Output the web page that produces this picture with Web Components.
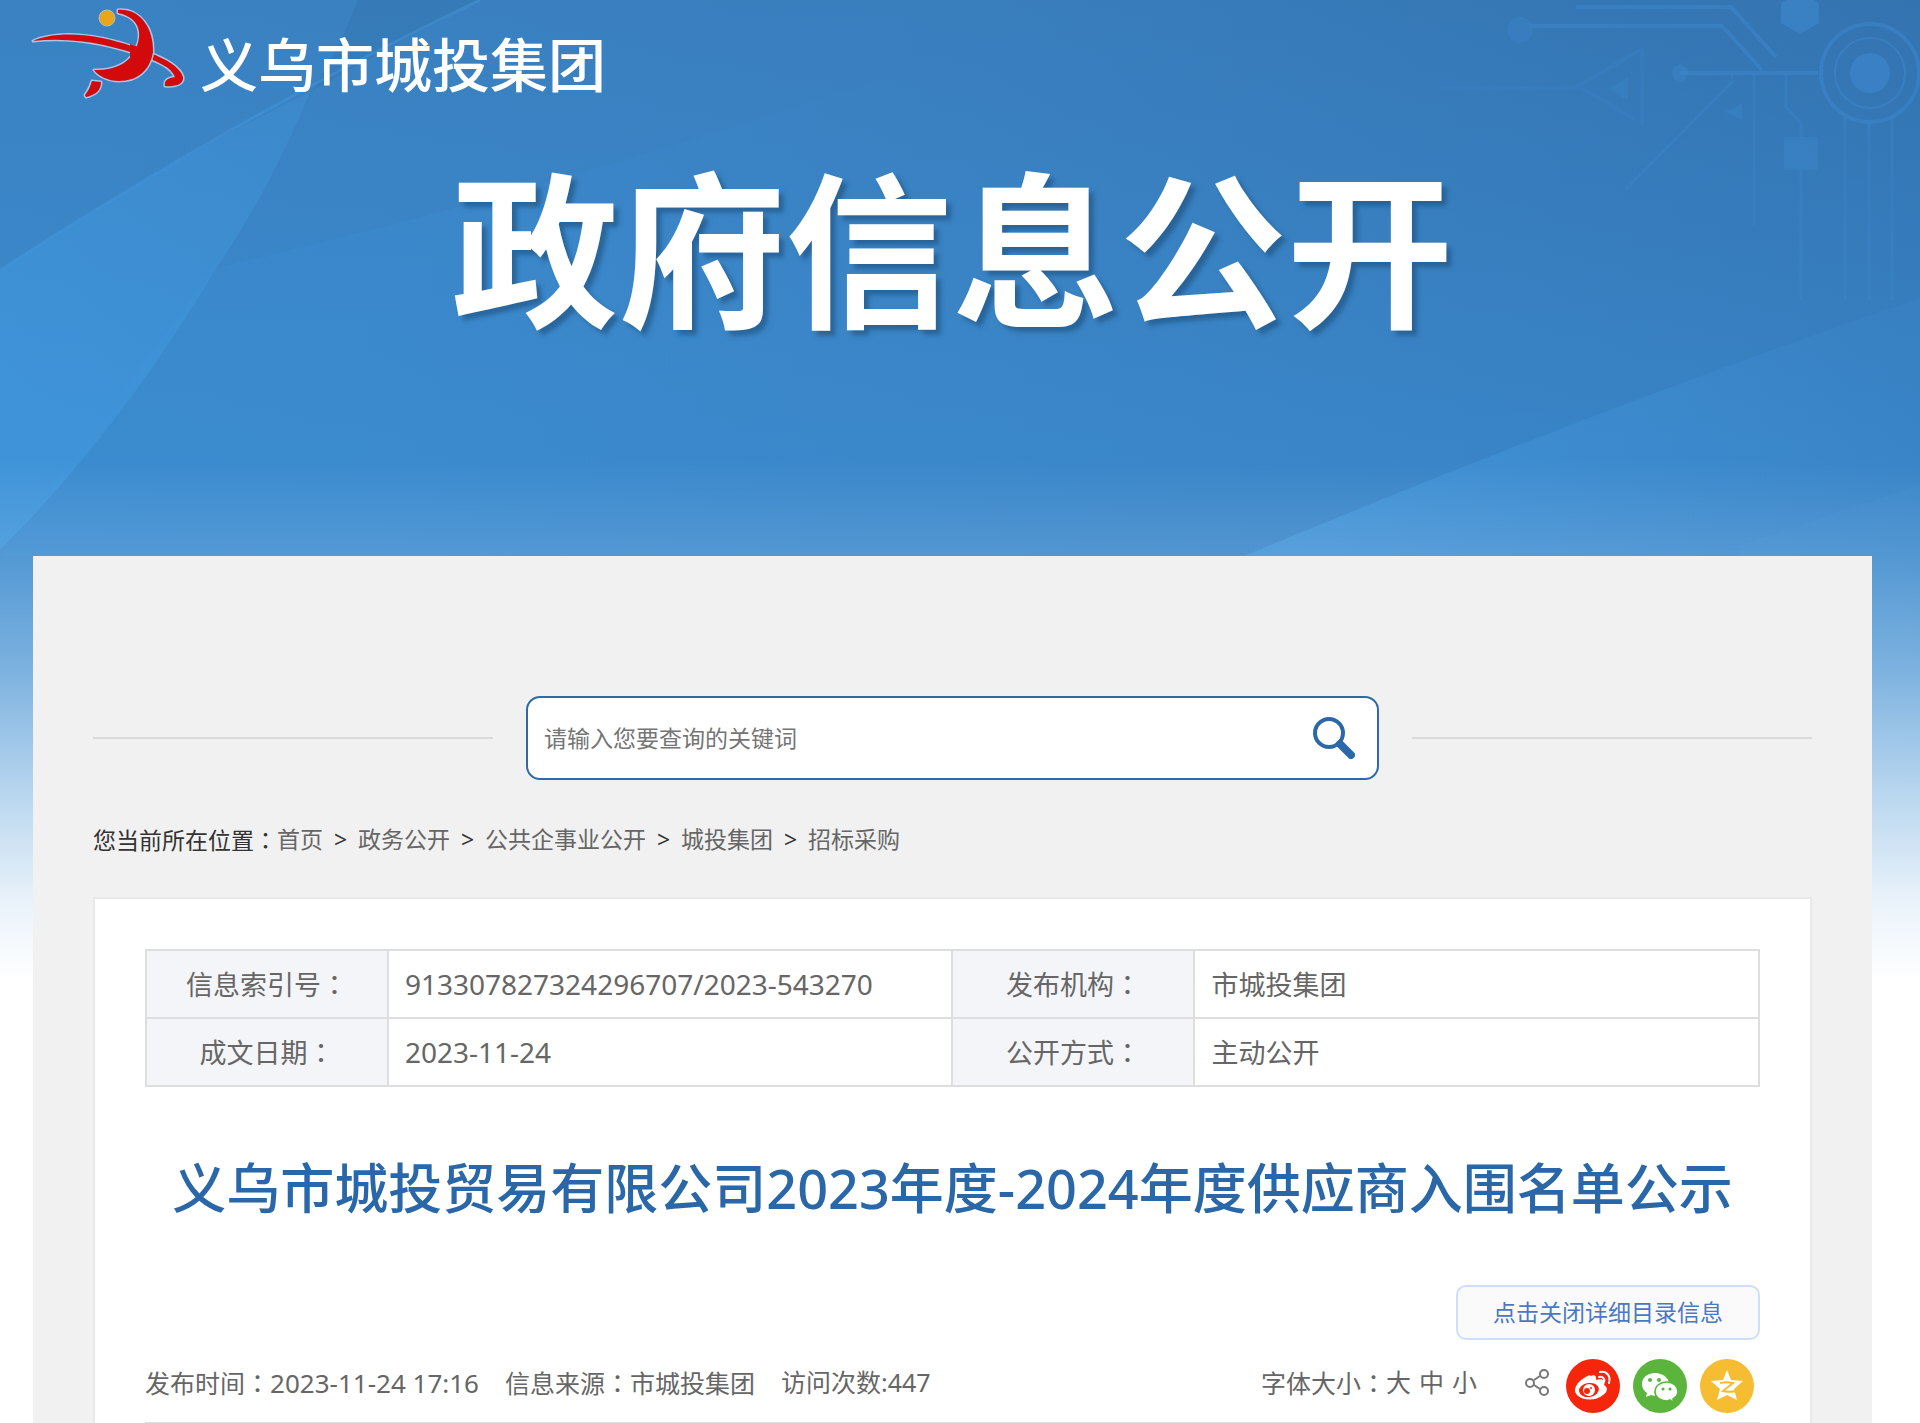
<!DOCTYPE html>
<html lang="zh-CN">
<head>
    <meta charset="UTF-8">
    <meta name="viewport" content="width=device-width, initial-scale=1.0">
    <title>义乌市城投集团 - 政府信息公开</title>
    <style>
        body {
            margin: 0;
            background: #fff;
            color: #666;
            font-family: "Noto Sans", "Noto Sans CJK SC", sans-serif;
            font-size: 23px;
            line-height: 35px;
        }
    </style>
</head>
<body>
    <page-shell>
        <site-header slot="header" brand="义乌市城投集团">政府信息公开</site-header>
        <search-bar placeholder="请输入您要查询的关键词"></search-bar>
        <bread-crumb label="您当前所在位置">
            <a href="#">首页</a>
            <a href="#">政务公开</a>
            <a href="#">公共企事业公开</a>
            <a href="#">城投集团</a>
            <a href="#">招标采购</a>
        </bread-crumb>
        <article-card>
            <info-table></info-table>
            <span slot="title">义乌市城投贸易有限公司2023年度-2024年度供应商入围名单公示</span>
            <article-meta slot="meta" time="2023-11-24 17:16" source="市城投集团" visits="447"></article-meta>
        </article-card>
    </page-shell>

    <script>
        // full-width colon, set in the middle of its cell
        const colon = '<span lang="zh-TW" style="font-family: \'Noto Sans CJK TC\', sans-serif">：</span>';

        class BaseElement extends HTMLElement {
            constructor() {
                super();
                this.attachShadow({ mode: 'open' });
            }

            connectedCallback() {
                this.shadowRoot.innerHTML = this.render();
            }
        }

        class PageBackdrop extends BaseElement {
            render() {
                return `
                    <style>
                        :host { display: block; }
                        svg { display: block; width: 100%; height: 100%; }
                    </style>
                    <svg viewBox="0 0 1920 980" preserveAspectRatio="none" aria-hidden="true">
                        <defs>
                            <linearGradient id="sky" x1="0" y1="0" x2="1" y2="0">
                                <stop offset="0" stop-color="#3a82c2"/>
                                <stop offset="0.5" stop-color="#397ebd"/>
                                <stop offset="1" stop-color="#3373b0"/>
                            </linearGradient>
                            <linearGradient id="lower" x1="0" y1="0" x2="0" y2="1">
                                <stop offset="0" stop-color="#3b90d6" stop-opacity="0"/>
                                <stop offset="0.45" stop-color="#3b90d6" stop-opacity="0.5"/>
                                <stop offset="1" stop-color="#3b90d6" stop-opacity="0.9"/>
                            </linearGradient>
                            <linearGradient id="fade" x1="0" y1="460" x2="0" y2="980" gradientUnits="userSpaceOnUse">
                                <stop offset="0" stop-color="#fff" stop-opacity="0"/>
                                <stop offset="0.18" stop-color="#fff" stop-opacity="0.12"/>
                                <stop offset="0.4" stop-color="#fff" stop-opacity="0.33"/>
                                <stop offset="0.65" stop-color="#fff" stop-opacity="0.65"/>
                                <stop offset="0.85" stop-color="#fff" stop-opacity="0.89"/>
                                <stop offset="1" stop-color="#fff"/>
                            </linearGradient>
                            <linearGradient id="left" x1="310" y1="90" x2="0" y2="480" gradientUnits="userSpaceOnUse">
                                <stop offset="0" stop-color="#419ae0" stop-opacity="0.25"/>
                                <stop offset="1" stop-color="#419ae0" stop-opacity="0.65"/>
                            </linearGradient>
                            <linearGradient id="right" x1="1300" y1="560" x2="1900" y2="330" gradientUnits="userSpaceOnUse">
                                <stop offset="0" stop-color="#4aa0e4" stop-opacity="0.5"/>
                                <stop offset="1" stop-color="#4296de" stop-opacity="0.1"/>
                            </linearGradient>
                            <linearGradient id="middle" x1="400" y1="200" x2="900" y2="300" gradientUnits="userSpaceOnUse">
                                <stop offset="0" stop-color="#3c94dc" stop-opacity="0.2"/>
                                <stop offset="1" stop-color="#3c94dc" stop-opacity="0"/>
                            </linearGradient>
                        </defs>
                        <rect width="1920" height="980" fill="url(#sky)"/>
                        <rect width="1920" height="980" fill="url(#lower)"/>
                        <path d="M358 0H480L400 42L313 90Q342 42 358 0Z" fill="#2c6ba0" fill-opacity="0.25"/>
                        <path d="M215 268Q560 190 1000 40V556H0Z" fill="url(#middle)"/>
                        <path d="M0 270Q160 165 310 92Q270 190 215 270Q120 430 0 550Z" fill="url(#left)"/>
                        <path d="M0 270Q240 115 480 0" fill="none" stroke="#4496dc" stroke-width="3" stroke-opacity="0.5"/>
                        <path d="M1230 562Q1580 415 1920 298V980H1230Z" fill="url(#right)"/>
                        <path d="M1740 545L1920 485V980H1740Z" fill="#4a9ce0" fill-opacity="0.12"/>
                        <g fill="none" stroke="#3c86ca" stroke-opacity="0.6">
                            <path d="M1576 7H1731L1776 57M1530 26H1722L1762 70M1680 73H1818" stroke-width="4"/>
                            <circle cx="1870" cy="73" r="49" stroke-width="4"/>
                            <circle cx="1870" cy="73" r="35" stroke-width="2"/>
                            <path d="M1754 75V225M1786 75V107L1801 123V137M1732 75V82L1625 190" stroke-width="3" stroke-opacity="0.4"/>
                            <path d="M1801 170V300M1845 117V300M1869 122V300M1892 117V300" stroke-width="3" stroke-opacity="0.4"/>
                            <path d="M1642 49V125M1642 49L1578 86L1634 119M1440 88H1578" stroke-width="4" stroke-opacity="0.3"/>
                        </g>
                        <g fill="#3c86ca" fill-opacity="0.7">
                            <path d="M1781 3L1800 -8L1819 3V23L1800 34L1781 23Z"/>
                            <circle cx="1870" cy="73" r="20"/>
                            <circle cx="1680" cy="73" r="8" fill-opacity="0.5"/>
                            <circle cx="1520" cy="30" r="13" fill-opacity="0.35"/>
                            <path d="M1784 137H1818V170H1784Z" fill-opacity="0.5"/>
                            <path d="M1607 89L1628 78V100ZM1725 112L1742 103V120Z" fill-opacity="0.4"/>
                        </g>
                        <rect width="1920" height="980" fill="url(#fade)"/>
                    </svg>
                `;
            }
        }

        class PageShell extends BaseElement {
            render() {
                return `
                    <style>
                        :host { display: block; position: relative; }
                        page-backdrop { position: absolute; inset: 0 0 auto; height: 980px; z-index: -1; }
                        main {
                            margin: 0 48px 0 33px;
                            padding: 140px 60px 0;
                            background: #f1f1f1;
                        }
                    </style>
                    <page-backdrop></page-backdrop>
                    <slot name="header"></slot>
                    <main><slot></slot></main>
                `;
            }
        }

        class SiteHeader extends BaseElement {
            render() {
                return `
                    <style>
                        :host { display: block; height: 556px; color: #fff; }
                        .brand {
                            display: flex;
                            align-items: center;
                            gap: 8px;
                            height: 130px;
                            padding-left: 24px;
                            font-size: 58px;
                            font-weight: 500;
                            line-height: 70px;
                        }
                        svg { width: 168px; height: 130px; }
                        h1 {
                            margin: 12px 15px 0 0;
                            font-family: "Noto Sans CJK SC", sans-serif;
                            font-size: 167px;
                            font-weight: 700;
                            line-height: 200px;
                            text-align: center;
                            text-shadow: 5px 5px 4px rgba(30, 80, 125, 0.6);
                        }
                    </style>
                    <div class="brand">
                        <svg viewBox="24 0 168 130" aria-hidden="true">
                            <g fill="#d20a0c" stroke="#a9c6e6" stroke-width="3" stroke-linejoin="round" paint-order="stroke">
                                <path d="M92 81L101 82C101 91 95 95 86 97L85 95C89 90 90 87 92 81Z"/>
                                <path d="M33 41C58 30 98 34 134 47L150 53C166 59 180 67 183 77C184 84 176 87 165 86C164 80 168 78 175 77C171 67 158 62 145 57C115 46 75 36 33 41Z"/>
                                <path d="M118 10C141 8 154 30 153 52C150 70 138 81 119 81C108 81 98 76 94 70C112 71 128 64 134 52C143 37 142 18 118 13Z"/>
                            </g>
                            <path d="M130 44L150 51L145 60L130 57Z" fill="#d20a0c"/>
                            <circle cx="107" cy="18" r="8" fill="#eaa61a" stroke="#a8bfc4" stroke-width="1"/>
                        </svg>
                        <span>${this.getAttribute('brand')}</span>
                    </div>
                    <h1><slot></slot></h1>
                `;
            }
        }

        class SearchBar extends BaseElement {
            render() {
                const text = this.getAttribute('placeholder');
                return `
                    <style>
                        :host { display: flex; align-items: center; gap: 33px; }
                        .rule { flex: 1; height: 2px; background: #dadada; }
                        form {
                            box-sizing: border-box;
                            display: flex;
                            align-items: center;
                            width: 853px;
                            height: 84px;
                            padding: 0 22px 0 16px;
                            border: 2px solid #2f69a8;
                            border-radius: 14px;
                            background: #fff;
                        }
                        input {
                            flex: 1;
                            min-width: 0;
                            height: 60px;
                            padding: 0;
                            border: 0;
                            outline: 0;
                            background: none;
                            color: #333;
                            font: inherit;
                        }
                        input::placeholder { color: #757575; opacity: 1; }
                        button { padding: 0; border: 0; background: none; cursor: pointer; }
                        svg { display: block; width: 42px; height: 42px; }
                    </style>
                    <span class="rule"></span>
                    <form role="search">
                        <input type="text" aria-label="${text}" placeholder="${text}">
                        <button type="button" aria-label="搜索">
                            <svg viewBox="0 0 42 42" fill="none" stroke="#2c68a8" stroke-linecap="round">
                                <circle cx="16" cy="16" r="14" stroke-width="4"/>
                                <path d="M27 27L38 38" stroke-width="8"/>
                            </svg>
                        </button>
                    </form>
                    <span class="rule"></span>
                `;
            }
        }

        class BreadCrumb extends BaseElement {
            render() {
                return `
                    <style>
                        :host { display: block; margin: 42px 0 39px; color: #333; }
                        nav { display: flex; }
                        a { color: #666; text-decoration: none; }
                        .sep { width: 35px; text-align: center; }
                    </style>
                    <nav aria-label="breadcrumb">
                        <span>${this.getAttribute('label')}${colon}</span>
                        ${[...this.querySelectorAll('a')]
                            .map(a => `<a href="${a.getAttribute('href')}">${a.textContent}</a>`)
                            .join('<span class="sep">&gt;</span>')}
                    </nav>
                `;
            }
        }

        class ArticleCard extends BaseElement {
            render() {
                return `
                    <style>
                        :host {
                            display: block;
                            padding: 50px 50px 0;
                            border: 2px solid #e8e9eb;
                            border-bottom: 0;
                            background: #fff;
                        }
                        h2 {
                            margin: 66px 0 62px;
                            color: #2a67a8;
                            font-size: 54px;
                            font-weight: 500;
                            line-height: 70px;
                            text-align: center;
                        }
                        .actions { display: flex; justify-content: flex-end; margin-bottom: 19px; }
                        button {
                            width: 304px;
                            height: 55px;
                            padding: 0;
                            border: 2px solid #cddffa;
                            border-radius: 10px;
                            background: #fafafa;
                            color: #4a78c2;
                            font: inherit;
                            cursor: pointer;
                        }
                    </style>
                    <slot></slot>
                    <h2><slot name="title"></slot></h2>
                    <div class="actions"><button type="button">点击关闭详细目录信息</button></div>
                    <slot name="meta"></slot>
                `;
            }
        }

        class InfoTable extends BaseElement {
            render() {
                return `
                    <style>
                        :host { display: block; font-size: 27px; }
                        table {
                            width: 100%;
                            border-collapse: collapse;
                            table-layout: fixed;
                        }
                        th, td {
                            box-sizing: border-box;
                            height: 68px;
                            padding: 0;
                            border: 2px solid #dddee0;
                        }
                        th { width: 15%; background: #f4f5f8; font-weight: 400; }
                        td { width: 35%; padding-left: 16px; }
                        .num { font-size: 28px; }
                    </style>
                    <table>
                        <tr>
                            <th scope="row">信息索引号${colon}</th>
                            <td class="num">913307827324296707/2023-543270</td>
                            <th scope="row">发布机构${colon}</th>
                            <td>市城投集团</td>
                        </tr>
                        <tr>
                            <th scope="row">成文日期${colon}</th>
                            <td class="num">2023-11-24</td>
                            <th scope="row">公开方式${colon}</th>
                            <td>主动公开</td>
                        </tr>
                    </table>
                `;
            }
        }

        class ArticleMeta extends BaseElement {
            render() {
                return `
                    <style>
                        :host {
                            display: flex;
                            justify-content: space-between;
                            padding-bottom: 9px;
                            border-bottom: 2px solid #dedede;
                            font-size: 25px;
                            line-height: 46px;
                        }
                        .facts { display: flex; gap: 26px; }
                        .num { font-size: 26px; }
                        .tools { display: flex; padding-right: 6px; }
                        .size { display: flex; gap: 8px; margin-right: 48px; }
                        .size a { color: inherit; text-decoration: none; }
                        .share { display: flex; align-items: center; gap: 13px; }
                        .share a { display: block; height: 54px; }
                        .share svg { display: block; }
                    </style>
                    <div class="facts">
                        <span>发布时间${colon}<span class="num">${this.getAttribute('time')}</span></span>
                        <span>信息来源${colon}${this.getAttribute('source')}</span>
                        <span>访问次数:${this.getAttribute('visits')}</span>
                    </div>
                    <div class="tools">
                        <div class="size">
                            <span style="margin-right: -8px">字体大小${colon}</span>
                            <a href="#">大</a><a href="#">中</a><a href="#">小</a>
                        </div>
                        <div class="share">
                            <a href="#" aria-label="分享">
                                <svg width="28" height="54" viewBox="0 0 28 54" fill="none" stroke="#777" stroke-width="2">
                                    <circle cx="5" cy="24" r="4"/>
                                    <circle cx="19" cy="15" r="4"/>
                                    <circle cx="19" cy="32" r="4"/>
                                    <path d="M9 21L15 17M9 26L15 30"/>
                                </svg>
                            </a>
                            <a href="#" aria-label="微博">
                                <svg width="54" height="54" viewBox="0 0 54 54">
                                    <circle cx="27" cy="27" r="27" fill="#f5260c"/>
                                    <path d="M25 17C28 15 31 17 30 21C36 19 40 21 38 26C42 28 42 33 37 36C30 42 17 42 11 36C6 31 11 23 18 19C21 17 24 15 25 17Z" fill="#fff"/>
                                    <ellipse cx="23" cy="31" rx="10" ry="7" fill="#f5260c" transform="rotate(-8 23 31)"/>
                                    <circle cx="23" cy="31" r="6" fill="#fff"/>
                                    <circle cx="21" cy="32" r="3" fill="#f5260c"/>
                                    <circle cx="25" cy="29" r="1" fill="#f5260c"/>
                                    <path d="M34 13C41 12 45 17 43 24M33 18C37 17 39 20 38 23" fill="none" stroke="#fff" stroke-width="2" stroke-linecap="round"/>
                                </svg>
                            </a>
                            <a href="#" aria-label="微信">
                                <svg width="54" height="54" viewBox="0 0 54 54">
                                    <circle cx="27" cy="27" r="27" fill="#5bb53c"/>
                                    <path d="M22 14C14 14 9 19 9 25C9 29 11 32 14 34L13 38L18 36C20 37 23 37 25 36C33 36 36 31 36 25C36 19 30 14 22 14Z" fill="#fff"/>
                                    <path d="M34 23C27 23 22 27 22 33C22 38 27 42 34 42L37 41L41 44L40 40C43 38 45 36 45 33C45 27 40 23 34 23Z" fill="#fff" stroke="#5bb53c" stroke-width="1.6"/>
                                    <g fill="#5bb53c">
                                        <circle cx="17" cy="21" r="2"/><circle cx="26" cy="21" r="2"/>
                                        <circle cx="30" cy="30" r="1.6"/><circle cx="37" cy="30" r="1.6"/>
                                    </g>
                                </svg>
                            </a>
                            <a href="#" aria-label="QQ空间">
                                <svg width="54" height="54" viewBox="0 0 54 54">
                                    <circle cx="27" cy="27" r="27" fill="#f6bd33"/>
                                    <path d="M27 11L31 21L43 22L34 30L37 41L27 36L17 41L20 30L11 22L23 21Z" fill="#fff"/>
                                    <path d="M20 24C24 23 29 23 33 24L23 32C27 33 32 33 36 32" fill="none" stroke="#f6bd33" stroke-width="2"/>
                                </svg>
                            </a>
                        </div>
                    </div>
                `;
            }
        }

        customElements.define('page-backdrop', PageBackdrop);
        customElements.define('page-shell', PageShell);
        customElements.define('site-header', SiteHeader);
        customElements.define('search-bar', SearchBar);
        customElements.define('bread-crumb', BreadCrumb);
        customElements.define('article-card', ArticleCard);
        customElements.define('info-table', InfoTable);
        customElements.define('article-meta', ArticleMeta);
    </script>
</body>
</html>
